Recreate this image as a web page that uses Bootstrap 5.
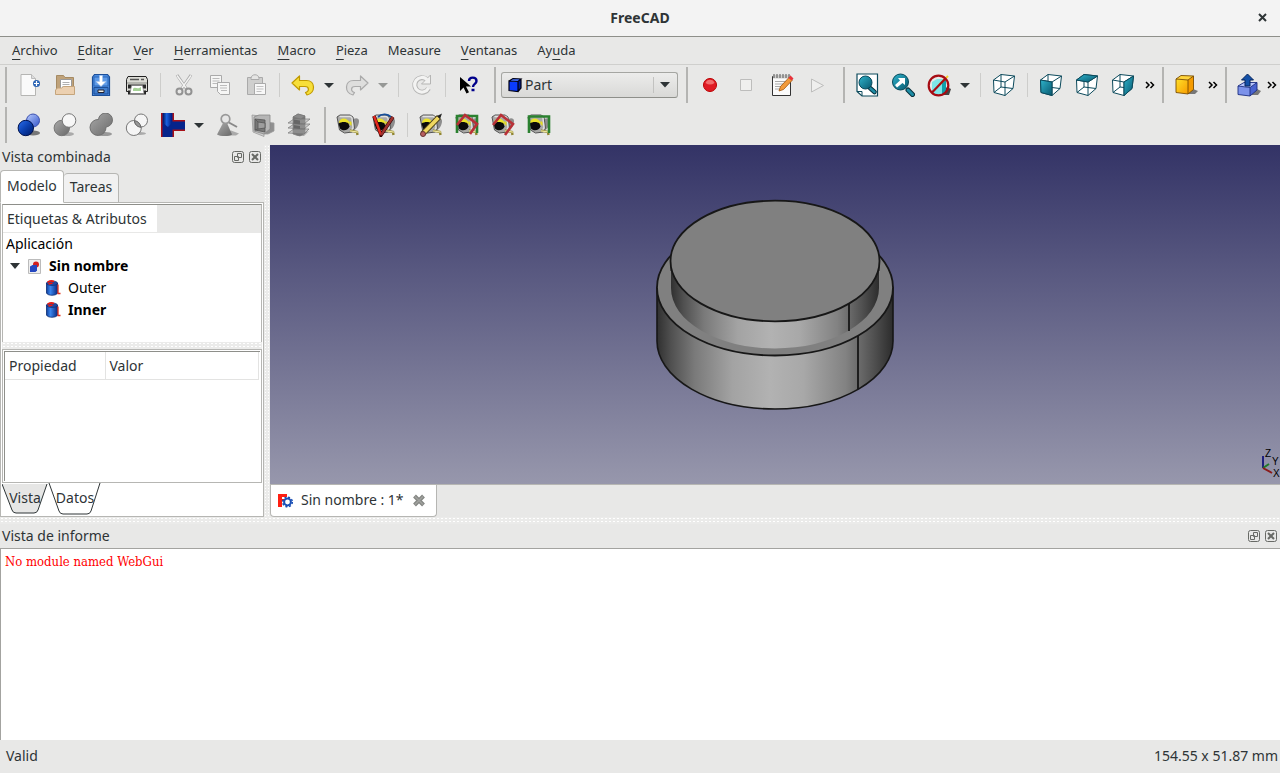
<!DOCTYPE html>
<html lang="es">
<head>
<meta charset="utf-8">
<meta name="viewport" content="width=device-width, initial-scale=1">
<title>FreeCAD</title>
<link rel="stylesheet" href="https://cdn.jsdelivr.net/npm/bootstrap@5.3.0/dist/css/bootstrap.min.css">
<style>
  :root { --chrome:#e8e8e7; --line:#b6b6b3; --dark:#8e8f8a; --ink:#2e3436; }
  body { font-family:"Noto Sans",sans-serif; font-size:14px; line-height:20px; color:var(--ink); background:var(--chrome); }
  button { font:inherit; color:inherit; }
  .titlebar { height:37px; background:#f3f3f3; border-bottom:1px solid var(--dark); padding-bottom:1px; }
  .close-win { right:9px; font-size:16px; line-height:20px; padding:0; width:18px; height:20px; border:0; background:none; }
  .menubar { height:28px; border-bottom:1px solid #cfcfcd; padding:0 0 1px 12px; gap:20px; font-size:13px; }
  .menubar a { color:var(--ink); text-decoration:none; }
  .menubar u { text-underline-offset:4px; }
  .tools { height:40px; padding-left:5px; }
  .tools > * { flex:none; }
  .grip { width:2px; height:36px; background:#b4b4b2; margin:0 4px 0 7px; }
  .grip:first-child { margin-left:0; }
  .rule { width:1px; height:24px; background:#cdcdcb; margin:0 5px; }
  .tool { width:36px; height:36px; padding:0; border:0; background:none; display:flex; align-items:center; justify-content:center; }
  .tool svg { width:24px; height:24px; }
  .drop { width:18px; height:36px; padding:0 2px 0 0; border:0; background:none; display:flex; align-items:center; justify-content:center; }
  .drop::before { content:""; border:5px solid transparent; border-top-color:var(--ink); border-bottom:0; }
  .drop:disabled::before { border-top-color:#969896; }
  .more { width:14px; padding:0; border:0; background:none; display:flex; align-items:center; justify-content:end; }
  .bench { width:177px; height:26px; margin:0 1px; border:1px solid #a5a6a2; border-bottom-color:#8e8f8a; border-radius:3px; background:linear-gradient(#ececeb,#d9d9d7); }
  .bench select { appearance:none; border:0; background:none; font:inherit; color:inherit; width:100%; height:24px; padding:0 23px; }
  .bench .cube { left:5px; top:4px; }
  .bench .tick { right:2px; top:4px; height:16px; width:22px; border-left:1px solid #c2c2c0; pointer-events:none; }
  .work { flex:372 1 0; }
  .report { flex:223 1 0; }
  .side { width:264px; }
  .dock-title { height:24px; padding:0 3px 0 2px; }
  .dock-title button { border:0; padding:0; background:none; display:flex; margin-left:5px; }
  .split-v { width:6px; background-color:#ebebea; background-image:radial-gradient(circle,#fff 1px,transparent 1px); background-size:3px 3px; }
  .split-h { height:7px; flex:none; background-color:#ebebea; background-image:radial-gradient(circle,#fff 1px,transparent 1px); background-size:4px 3px; }
  .dock-tabs { height:34px; }
  .dock-tabs button { border:1px solid var(--line); border-radius:4px 4px 0 0; padding:0 6px 2px; background:#f1f1f1; height:30px; border-left-width:0; }
  .dock-tabs button.active { height:33px; background:#fff; border-left-width:1px; border-bottom-color:#fff; }
  .dock-tabs .fillline { border-bottom:1px solid var(--line); }
  .pane { background:#fff; border:1px solid var(--line); border-top:0; padding:1px; }
  .tree { flex:140 1 0; border:1px solid var(--line); border-top-color:var(--dark); border-bottom:0; }
  .tree-head { height:28px; background:var(--chrome); }
  .tree-head span { background:#fff; height:27px; width:154px; line-height:27px; padding-left:4px; display:block; }
  .tree-body { color:#000; line-height:22px; }
  .tree-body li { padding-left:3px; }
  .tree-body .root { padding-left:7px; gap:8px; }
  .tree-body .leaf { padding-left:42px; gap:7px; }
  .fold { width:10px; height:22px; border:0; padding:0; background:none; display:flex; align-items:center; }
  .fold::before { content:""; border:5px solid transparent; border-top:6px solid var(--ink); border-bottom:0; }
  .props { flex:133 1 0; border:1px solid var(--line); padding:1px; }
  .props-in { border:1px solid var(--dark); border-right:0; border-bottom:0; padding-right:1px; }
  .props th { font-weight:400; height:28px; padding:0 4px; border:solid #e3e3e2; border-width:0 1px 1px 0; }
  .trap { height:32px; border:0; padding:0 0 3px; background:none; }
  .trap svg { left:0; top:0; }
  .trap span { position:relative; }
  .view { background:linear-gradient(#333366,#9797ac); }
  .doc-tabs { height:33px; border-top:1px solid var(--line); }
  .doc-tab { width:167px; background:#fff; border:1px solid var(--line); border-top:0; border-radius:0 0 4px 4px; padding:0 10px 1px 7px; height:32px; }
  .doc-tab button { border:0; background:none; padding:0; }
  .log { background:#fff; border:1px solid #a3a3a0; border-width:1px 0 0 1px; color:#f00; font-family:"DejaVu Serif Condensed","DejaVu Serif",serif; font-size:13px; padding:3px 4px; }
  .status { height:33px; padding:0 2px 1px 6px; }
</style>
</head>
<body>
<svg width="0" height="0" class="position-absolute" aria-hidden="true">
  <defs>
    <linearGradient id="gBlue" x1="0" y1="0" x2="1" y2="1"><stop offset="0" stop-color="#2a6ff0"/><stop offset=".5" stop-color="#0b3fae"/><stop offset="1" stop-color="#001a66"/></linearGradient>
    <linearGradient id="gPale" x1="0" y1="0" x2="1" y2="1"><stop offset="0" stop-color="#b9ccff"/><stop offset="1" stop-color="#3455c8"/></linearGradient>
    <linearGradient id="gGrey" x1="0" y1="0" x2="1" y2="1"><stop offset="0" stop-color="#aaa"/><stop offset="1" stop-color="#686868"/></linearGradient>
    <linearGradient id="gTeal" x1="0" y1="0" x2="1" y2="1"><stop offset="0" stop-color="#2fb3cb"/><stop offset="1" stop-color="#07586f"/></linearGradient>
    <linearGradient id="gGold" x1="0" y1="0" x2="1" y2="1"><stop offset="0" stop-color="#ffe02a"/><stop offset="1" stop-color="#f89c00"/></linearGradient>
    <linearGradient id="gPipe"><stop offset="0" stop-color="#001a66"/><stop offset=".4" stop-color="#1a62e0"/><stop offset="1" stop-color="#001a80"/></linearGradient>
    <linearGradient id="gCyl"><stop offset="0" stop-color="#0f3f9a"/><stop offset=".35" stop-color="#3c86ee"/><stop offset="1" stop-color="#0a2a80"/></linearGradient>
    <symbol id="tape" viewBox="0 0 24 24">
      <path d="M15 8c4-4 8-3 8 0s-2 8-5 9z" fill="#8d8d8d"/>
      <path d="M1 4l3-2h10l3 2 1.500 11-2 4-8 1-5-3z" fill="#a9a9a7" stroke="#555" stroke-width="1"/>
      <path d="M3.500 3.500h11l1.500 1.500 1 10-2 3" fill="none" stroke="#e2e2e2" stroke-width="1.400"/>
      <path d="M3 10C3 4 12 4 13.500 10l-1 2H4z" fill="#ece42a"/>
      <path d="M2.500 10.500c3-2 8-2 10 0l1 3c-1 4-7 5-9.500 2z" fill="#0b0b0b"/><path d="M13.500 8l2 1v4l-2-2z" fill="#e7df20"/>
      <path d="M14 17.500l7 1.500.500 3" fill="none" stroke="#8f8430" stroke-width="2.400"/><path d="M14 17.800l8 1.400" stroke="#eee6a0" stroke-width="1.200"/>
    </symbol>
    <symbol id="wire" viewBox="0 0 24 24"><path d="M1.500 7L13 9v13.500L2 19.500zM1.500 7L9 1.500 22.500 3 13 9M22.500 3L21 15.500l-8 7M9 1.500V14l12 1.500M9 14l-7 5.500" fill="none" stroke="#0c4a5c" stroke-width="1"/></symbol>
    <symbol id="cyl" viewBox="0 0 16 16"><path d="M1.500 3v10c1 3 10 3 11 0V3z" fill="url(#gCyl)" stroke="#0a2a70" stroke-width=".8"/><ellipse cx="7" cy="3.200" rx="5.500" ry="2.300" fill="#24489e" stroke="#0a2a70" stroke-width=".6"/><path d="M2.500 2.500C4 1 7 .800 9 1.500M3.500 4l4-1" fill="none" stroke="#f2190c" stroke-width="1.700"/><path d="M13 4.500V13.500h2.500" fill="none" stroke="#e0301c" stroke-width="1.300"/></symbol>
  </defs>
</svg>
<div class="d-flex flex-column vh-100 overflow-hidden">

  <header class="titlebar position-relative d-flex align-items-center justify-content-center flex-shrink-0">
    <strong>FreeCAD</strong>
    <button class="close-win position-absolute d-flex align-items-center justify-content-center" aria-label="Cerrar"><svg width="9" height="9" viewBox="0 0 9 9"><path d="M1 1l7 7M8 1L1 8" stroke="#2e3436" stroke-width="2"/></svg></button>
  </header>

  <nav class="menubar d-flex align-items-center flex-shrink-0">
    <a href="#"><u>A</u>rchivo</a><a href="#"><u>E</u>ditar</a><a href="#"><u>V</u>er</a><a href="#"><u>H</u>erramientas</a><a href="#"><u>M</u>acro</a><a href="#"><u>P</u>ieza</a><a href="#">Measure</a><a href="#"><u>V</u>entanas</a><a href="#">Ay<u>u</u>da</a>
  </nav>

  <div class="tools d-flex align-items-center flex-shrink-0 overflow-hidden" role="toolbar" aria-label="Archivo y vista">
    <span class="grip"></span>
    <button class="tool" aria-label="Nuevo"><svg viewBox="0 0 24 24"><path d="M4 1.500h10.500l4 4V22.500H4z" fill="#fafafa" stroke="#b5b5b3"/><path d="M14.500 1.500v4h4" fill="#ddd" stroke="#bbb"/><circle cx="19.500" cy="10.500" r="3.500" fill="#2a63b4"/><path d="M19.500 8v5M17 10.500h5" stroke="#fff" stroke-width="1.200"/></svg></button>
    <button class="tool" aria-label="Abrir"><svg viewBox="0 0 24 24"><path d="M3.500 19V2.500h7l1.500 2h8.500V19z" fill="#bfa27a" stroke="#a58a63"/><path d="M7.500 6.500h11v11h-11z" fill="#fff" stroke="#999"/><path d="M9.500 9.500h7M9.500 11.500h7M9.500 13.500h5" stroke="#b0b0b0"/><path d="M2.500 17l2-2h4l2-1.500h11V21.500h-19z" fill="#ecd0b0" stroke="#c5a57c"/></svg></button>
    <button class="tool" aria-label="Guardar"><svg viewBox="0 0 24 24"><path d="M3.500 4l2-2.500h13l2 2.500v18.500h-17z" fill="#4a8be0" stroke="#1c4f99" stroke-width="1.200"/><path d="M5 4h14v9H5z" fill="#5e9be8" stroke="#2b66b8"/><path d="M10.500 2.500h3v6h3.500l-5 5-5-5h3.500z" fill="#fff" stroke="#a9c5ea" stroke-width=".6"/><path d="M5 14.500h14v6.500H5z" fill="#3f7dcd" stroke="#1c4f99"/><path d="M9 17h6v2.500H9z" fill="#f2f2e8" stroke="#223"/></svg></button>
    <button class="tool" aria-label="Imprimir"><svg viewBox="0 0 24 24"><path d="M3 3.500h18l1.500 3v12H1.500v-12z" fill="#dcdcd6" stroke="#222"/><path d="M5 6.500h9M16 6.500h3" stroke="#555" stroke-width="1.600"/><path d="M2 9h20v2H2z" fill="#b4b5af"/><path d="M3 11.500h18v4H3z" fill="#2a2a2a"/><path d="M3 17.500h18v4H3z" fill="#222"/><path d="M6.500 12.500h11l1.500 8H5z" fill="#fff" stroke="#777" stroke-width=".6"/><path d="M8 16c2-3 4 1 8-2v4H8z" fill="#a5d296"/></svg></button>
    <span class="rule"></span>
    <button class="tool" aria-label="Cortar"><svg viewBox="0 0 24 24" fill="none"><path d="M5 2l9.500 14M19 2L9.500 16" stroke="#aaa" stroke-width="3"/><path d="M5 2.500l9 12.500M19 2.500L10 15" stroke="#f3f3f2" stroke-width="1.400"/><circle cx="7.500" cy="18.500" r="3" stroke="#929292" stroke-width="2"/><circle cx="16.500" cy="18.500" r="3" stroke="#929292" stroke-width="2"/></svg></button>
    <button class="tool" aria-label="Copiar"><svg viewBox="0 0 24 24" fill="#f6f6f5" stroke="#aaa"><path d="M2.500 2.500h11v12h-11z"/><path d="M4.500 5.500h7M4.500 8h7M4.500 10.500h5" stroke="#bbb"/><path d="M9.500 9.500h12v12h-9l-3-3z"/><path d="M12 12.500h7M12 15h7M13 17.500h6" stroke="#bbb"/></svg></button>
    <button class="tool" aria-label="Pegar"><svg viewBox="0 0 24 24" stroke="#aaa"><path d="M3.500 4.500h15v17h-15z" fill="#cfcfce"/><path d="M7 5.500c0-5 8-5 8 0v1H7z" fill="#e5e5e4"/><path d="M10.500 10.500h11v11h-11z" fill="#f8f8f8"/><path d="M12.500 13.500h7M12.500 16h7M12.500 18.500h5" stroke="#c2c2c2"/></svg></button>
    <span class="rule"></span>
    <button class="tool" aria-label="Deshacer"><svg viewBox="0 0 24 24"><path d="M1 10l7.500-7v4.500h7c9 0 9.500 12.500.5 14.500l-1.500-2.500c4-1 4-6-.5-6H8.500V17z" fill="#f7df3a" stroke="#c19a00" stroke-width="1.200" stroke-linejoin="round"/></svg></button>
    <button class="drop" aria-label="Lista deshacer"></button>
    <button class="tool" aria-label="Rehacer" disabled><svg viewBox="0 0 24 24"><path d="M23 10l-7.500-7v4.500h-7c-9 0-9.500 12.500-.5 14.500l1.500-2.500c-4-1-4-6 .5-6h5.500V17z" fill="#dededd" stroke="#aaa" stroke-width="1.200" stroke-linejoin="round"/></svg></button>
    <button class="drop" aria-label="Lista rehacer" disabled></button>
    <span class="rule"></span>
    <button class="tool" aria-label="Actualizar" disabled><svg viewBox="0 0 24 24" fill="none"><path d="M17 6.500a7.300 7.300 0 1 0 1.500 9" stroke="#b5b5b4" stroke-width="5"/><path d="M20.500 2v9h-9z" fill="#f1f1f0" stroke="#b5b5b4"/><path d="M17 6.500a7.300 7.300 0 1 0 1.500 8.500" stroke="#f3f3f2" stroke-width="3.200"/></svg></button>
    <span class="rule"></span>
    <button class="tool" aria-label="¿Qué es esto?"><svg viewBox="0 0 24 24"><path d="M3 4v14l3.500-3.500 3 6 2.500-1.200-3-5.800h5z" fill="#000"/><path d="M12 8c0-4.500 7.500-4.500 7.500 0 0 3-3.500 2.800-3.500 6M14.500 17h3" fill="none" stroke="#00008b" stroke-width="2.400"/></svg></button>
    <span class="grip"></span>
    <label class="bench position-relative"><svg class="cube position-absolute" width="16" height="16" viewBox="0 0 16 16"><path d="M2 4l9 .500v10L2 13.500z" fill="#0a3bff"/><path d="M2 4l4-2.500 8 .5-3 2.500z" fill="#4a76ff"/><path d="M14 2v9l-3 3.500v-10z" fill="#001f99"/><path d="M2 4l9 .500v10L2 13.500zM2 4l4-2.500 8 .5-3 2.500M14 2v9l-3 3.500" fill="none" stroke="#001" stroke-width="1.200"/></svg>
      <select aria-label="Banco de trabajo"><option>Part</option></select>
      <span class="tick position-absolute d-flex align-items-center justify-content-center"><svg width="10" height="6" viewBox="0 0 10 6"><path d="M0 0h10L5 5.500z" fill="#2e3436"/></svg></span></label>
    <span class="grip"></span>
    <button class="tool" aria-label="Grabar macro"><svg viewBox="0 0 24 24"><circle cx="12" cy="12" r="6.500" fill="#e01b24" stroke="#b00"/><path d="M7.500 10c1-4.500 8-4.500 9 0-3 2-6 2-9 0" fill="#f26d6d"/></svg></button>
    <button class="tool" aria-label="Detener" disabled><svg viewBox="0 0 24 24"><path d="M6.500 6.500h11v11h-11z" fill="#efefee" stroke="#bdbdbc"/></svg></button>
    <button class="tool" aria-label="Macros"><svg viewBox="0 0 24 24"><path d="M2.500 3.500h18v19h-18z" fill="#fbfbfb" stroke="#333"/><path d="M3 2h18v3.500H3z" fill="#cfcfcd"/><path d="M4 1v4M7 1v4M10 1v4M13 1v4M16 1v4M19 1v4" stroke="#555"/><path d="M5 8.500h13M5 11h10M5 13.500h8M5 16h5" stroke="#aaa"/><path d="M9 18l1.500-4.500 9-9.500 3 3-9 9.500z" fill="#f29b3c" stroke="#a15510" stroke-width=".8"/><path d="M18.500 5l2-2.500 3 3-2 2z" fill="#e8323c"/></svg></button>
    <button class="tool" aria-label="Ejecutar macro" disabled><svg viewBox="0 0 24 24"><path d="M5.500 6v13l12-6.500z" fill="#efefee" stroke="#bdbdbc"/></svg></button>
    <span class="grip"></span>
    <button class="tool" aria-label="Ajustar todo"><svg viewBox="0 0 24 24"><path d="M2 1h20.500v22H7l-5-4.500z" fill="#fff" stroke="#0c4a5c" stroke-width="1.200"/><path d="M2 18.500h5V23" fill="none" stroke="#0c4a5c"/><path d="M15 15l4.500 4" stroke="#062f3b" stroke-width="4.600" stroke-linecap="round"/><path d="M15.500 15.500l4 3.500" stroke="#1d8ca5" stroke-width="2.600" stroke-linecap="round"/><circle cx="10.500" cy="9.500" r="6.500" fill="url(#gTeal)" stroke="#07485a"/></svg></button>
    <button class="tool" aria-label="Ajustar selección"><svg viewBox="0 0 24 24"><path d="M17 17l4.500 4.500" stroke="#062f3b" stroke-width="5" stroke-linecap="round"/><path d="M17 17l4.500 4.500" stroke="#1d8ca5" stroke-width="3" stroke-linecap="round"/><circle cx="9.500" cy="9" r="8" fill="url(#gTeal)" stroke="#07485a"/><path d="M4 12l5-4.500-2-2.500h7v7l-2.500-2L6 14.500z" fill="#fff"/></svg></button>
    <button class="tool" aria-label="Estilo de dibujo"><svg viewBox="0 0 24 24"><path d="M13 22h9l2-6-4-2z" fill="#444"/><path d="M5 9l5-3h9v12l-4 4H7l-2-3z" fill="#7fe6e8"/><path d="M15 10l4-4v12l-4 4z" fill="#12a0ac"/><path d="M12 12l9-9" stroke="#f7d028" stroke-width="2"/><circle cx="11.500" cy="12.500" r="9.800" fill="none" stroke="#a60c14" stroke-width="2.200"/><path d="M5 19.500L18.500 5.500" stroke="#a60c14" stroke-width="2.200"/></svg></button>
    <button class="drop" aria-label="Más estilos"></button>
    <span class="rule"></span>
    <button class="tool" aria-label="Axonométrica"><svg viewBox="0 0 24 24"><path d="M1.500 7L9 1.500 22.500 3 21 15.500l-8 7-11-3z" fill="#fff"/><use href="#wire"/></svg></button>
    <span class="rule"></span>
    <button class="tool" aria-label="Frontal"><svg viewBox="0 0 24 24"><path d="M1.500 7L9 1.500 22.500 3 21 15.500l-8 7-11-3z" fill="#fff"/><use href="#wire"/><path d="M1.500 7L13 9v13.500L2 19.500z" fill="url(#gTeal)" stroke="#0c4a5c"/></svg></button>
    <button class="tool" aria-label="Superior"><svg viewBox="0 0 24 24"><path d="M1.500 7L9 1.500 22.500 3 21 15.500l-8 7-11-3z" fill="#fff"/><use href="#wire"/><path d="M1.500 7L9 1.500 22.500 3 13 9z" fill="url(#gTeal)" stroke="#0c4a5c"/></svg></button>
    <button class="tool" aria-label="Derecha"><svg viewBox="0 0 24 24"><path d="M1.500 7L9 1.500 22.500 3 21 15.500l-8 7-11-3z" fill="#fff"/><use href="#wire"/><path d="M22.500 3L21 15.500l-8 7V9z" fill="url(#gTeal)" stroke="#0c4a5c"/></svg></button>
    <button class="more" aria-label="Más vistas"><svg width="10" height="8" viewBox="0 0 10 8"><path d="M1 1l3 3-3 3M5.500 1l3 3-3 3" fill="none" stroke="#000" stroke-width="1.500"/></svg></button>
    <span class="grip"></span>
    <button class="tool" aria-label="Cubo"><svg viewBox="0 0 24 24"><path d="M14 21h7l3-3-5-2z" fill="#777"/><path d="M2 6l12 1v14L2 19.500z" fill="url(#gGold)"/><path d="M2 6l5-3.500 12.500.5L14 7z" fill="#ffd43a"/><path d="M19.500 3v13.500L14 21V7z" fill="#f59b00"/><path d="M2 6l12 1v14L2 19.500zM2 6l5-3.500 12.500.5L14 7M19.500 3v13.500L14 21" fill="none" stroke="#7a4d00" stroke-width=".9"/></svg></button>
    <button class="more" aria-label="Más sólidos"><svg width="10" height="8" viewBox="0 0 10 8"><path d="M1 1l3 3-3 3M5.500 1l3 3-3 3" fill="none" stroke="#000" stroke-width="1.500"/></svg></button>
    <span class="grip"></span>
    <button class="tool" aria-label="Extruir"><svg viewBox="0 0 24 24"><path d="M14 22h7l3-4-4-2z" fill="#777"/><path d="M1 13l12 1.500V23L1 21.500z" fill="#7c92ea"/><path d="M1 13l6-3.500h13l-7 5z" fill="#b6c4fb"/><path d="M20 9.500V17l-7 6v-8.500z" fill="#4963cf"/><path d="M1 13l12 1.500V23L1 21.500zM1 13l6-3.500h13l-7 5M20 9.500V17l-7 6" fill="none" stroke="#1b2c80" stroke-width=".9"/><path d="M10.500 1l6 6H13v6H8V7H4.500z" fill="#1451a8" stroke="#06245c"/></svg></button>
    <button class="more justify-content-start" aria-label="Más operaciones"><svg width="10" height="8" viewBox="0 0 10 8"><path d="M1 1l3 3-3 3M5.500 1l3 3-3 3" fill="none" stroke="#000" stroke-width="1.500"/></svg></button>
  </div>

  <div class="tools d-flex align-items-center flex-shrink-0 overflow-hidden" role="toolbar" aria-label="Operaciones booleanas y medidas">
    <span class="grip"></span>
    <button class="tool" aria-label="Booleana"><svg viewBox="0 0 24 24"><ellipse cx="16" cy="20" rx="7" ry="2.500" fill="#777"/><circle cx="16" cy="7.500" r="6.500" fill="url(#gPale)" stroke="#3b50b0"/><circle cx="8.800" cy="15" r="7.700" fill="url(#gBlue)" stroke="#00124d"/></svg></button>
    <button class="tool" aria-label="Corte"><svg viewBox="0 0 24 24"><ellipse cx="14" cy="21" rx="7" ry="2" fill="#aaa"/><circle cx="8.800" cy="15" r="7.700" fill="url(#gGrey)" stroke="#777"/><circle cx="16" cy="7.500" r="6.800" fill="#f7f7f7" stroke="#777"/></svg></button>
    <button class="tool" aria-label="Unión"><svg viewBox="0 0 24 24"><ellipse cx="16" cy="21" rx="7" ry="2" fill="#999"/><path d="M9.500 6.500A7 7 0 1 1 17 14 8 8 0 1 1 9.500 6.500z" fill="url(#gGrey)" stroke="#707070"/></svg></button>
    <button class="tool" aria-label="Intersección"><svg viewBox="0 0 24 24"><ellipse cx="15" cy="20.500" rx="6" ry="1.500" fill="#aaa"/><circle cx="8.800" cy="15" r="7.500" fill="#f5f5f5" stroke="#777"/><circle cx="16" cy="7.500" r="6.500" fill="#f5f5f5" stroke="#777"/><path d="M9.500 7.600C9.500 11 12 14 16 14.200 15.500 11 13 8 9.500 7.600z" fill="#999" stroke="#666"/></svg></button>
    <button class="tool" aria-label="Unir"><svg viewBox="0 0 24 24"><path d="M0 0h13v24H0z" fill="#a81018"/><path d="M12 7h12v11H12z" fill="#a81018"/><path d="M1.500 0h10v24h-10z" fill="#06248c"/><path d="M2 0h9v10l-4 4-5-4z" fill="url(#gPipe)"/><path d="M10 8.500h14v8H10z" fill="#06248c"/></svg></button>
    <button class="drop" aria-label="Más uniones"></button>
    <button class="tool" aria-label="Comprobar geometría"><svg viewBox="0 0 24 24"><path d="M4 22.500h17l3-2-8-3z" fill="#aaa"/><path d="M8 10L2 21.500c4 2 12 2 15 0L12 10z" fill="url(#gGrey)"/><path d="M13 9l9 5" stroke="#888" stroke-width="2"/><circle cx="10.500" cy="6" r="4.300" fill="#e6e6e6" stroke="#999" stroke-width="1.700"/></svg></button>
    <button class="tool" aria-label="Eliminar características"><svg viewBox="0 0 24 24" stroke="#999" stroke-width=".8"><path d="M1 2l12 1.500v20L2 19z" fill="#cfcfcf"/><path d="M13 9l10 1v8l-6 3h-4z" fill="#909090"/><path d="M3 4l5-2h11v14l-6 5-10-3z" fill="#b5b5b5" stroke="#888"/><path d="M4 6l10 1v12L4 17z" fill="#777" stroke="#555"/><path d="M7 9l7 1v5l-7 1z" fill="#9d9d9d" stroke="#555"/><path d="M4 6l3 3M4 17l3-1" stroke="#555"/></svg></button>
    <button class="tool" aria-label="Secciones"><svg viewBox="0 0 24 24" stroke="#777" stroke-width=".7"><path d="M8 23h9l5-5z" fill="#aaa" stroke="none"/><path d="M6 4v17l7 2 5-3V3l-7-2z" fill="#777"/><path d="M1 10l6-4h16l-6 5zM1 15l6-4h16l-6 5zM1 20l6-4h15l-5 5z" fill="#aaa" fill-opacity=".45"/><path d="M6 4l5-3 7 2-4 3z" fill="#8a8a8a"/><path d="M6.500 6.500l6.500 1v4l-6.500-1zM6.500 12l6.500 1v3l-6.500-1z" fill="#666" stroke="none"/></svg></button>
    <span class="grip"></span>
    <button class="tool" aria-label="Medir lineal"><svg viewBox="0 0 24 24"><use href="#tape"/></svg></button>
    <button class="tool" aria-label="Medir angular"><svg viewBox="0 0 24 24"><use href="#tape"/><path d="M6 4c4-4 10-3 13 0" fill="none" stroke="#174f9a" stroke-width="1.800"/><path d="M2 3l7 19L21 4" fill="none" stroke="#300" stroke-width="3.600"/><path d="M2 3l7 19" stroke="#e32a20" stroke-width="2.400"/><path d="M9 22L21 4" stroke="#a03430" stroke-width="2.400"/></svg></button>
    <span class="rule"></span>
    <button class="tool" aria-label="Borrar medidas"><svg viewBox="0 0 24 24"><use href="#tape"/><path d="M3.500 21L20 4" stroke="#4f4418" stroke-width="5.500"/><path d="M4 20.500L19.500 4.500" stroke="#f0d860" stroke-width="3.800"/><path d="M18 3l5-2.500L21 6z" fill="#222"/><circle cx="4" cy="21" r="2.500" fill="#b86060" stroke="#633"/></svg></button>
    <button class="tool" aria-label="Alternar todo"><svg viewBox="0 0 24 24"><use href="#tape"/><path d="M2 20V3h20v17" fill="none" stroke="#2b8130" stroke-width="2.600"/><path d="M2 12l8-10 12 9-7 10" fill="none" stroke="#b83138" stroke-width="2.600"/></svg></button>
    <button class="tool" aria-label="Alternar 3D"><svg viewBox="0 0 24 24"><use href="#tape"/><path d="M2 12l8-10 12 9-8 11" fill="none" stroke="#b83138" stroke-width="2.600"/></svg></button>
    <button class="tool" aria-label="Alternar delta"><svg viewBox="0 0 24 24"><use href="#tape"/><path d="M2 20V3.500h20V20" fill="none" stroke="#2b8130" stroke-width="2.600"/></svg></button>
  </div>

  <main class="work d-flex">
    <aside class="side d-flex flex-column flex-shrink-0">
      <div class="dock-title d-flex align-items-center"><span class="me-auto">Vista combinada</span>
        <button aria-label="Desacoplar"><svg width="12" height="12" viewBox="0 0 12 12" fill="none" stroke="#686a66"><rect x=".5" y=".5" width="11" height="11" rx="2"/><path d="M5.500 2.500h4v4h-4zM2.500 5.500h4v4h-4z"/></svg></button>
        <button aria-label="Cerrar panel"><svg width="12" height="12" viewBox="0 0 12 12" fill="none" stroke="#686a66"><rect x=".5" y=".5" width="11" height="11" rx="2"/><path d="M3 3l6 6M9 3L3 9" stroke-width="2"/></svg></button>
      </div>
      <div class="dock-tabs d-flex align-items-end" role="tablist">
        <button class="active" role="tab">Modelo</button><button role="tab">Tareas</button><span class="fillline flex-grow-1"></span>
      </div>
      <div class="pane flex-grow-1 d-flex flex-column">
        <div class="tree">
          <div class="tree-head"><span>Etiquetas &amp; Atributos</span></div>
          <ul class="tree-body list-unstyled mb-0">
            <li>Aplicación</li>
            <li class="root d-flex align-items-center fw-bold"><button class="fold" aria-label="Contraer"></button><svg width="13" height="15" viewBox="0 0 13 15"><path d="M.5.5h12v14H.5z" fill="#eee" stroke="#bbb"/><circle cx="8" cy="5.500" r="3" fill="#d3201f"/><path d="M2 7.500L4.500 6H9v5.500L7.500 13H2z" fill="#2447c0"/></svg><span>Sin nombre</span></li>
            <li class="leaf d-flex align-items-center"><svg width="16" height="16"><use href="#cyl"/></svg><span>Outer</span></li>
            <li class="leaf d-flex align-items-center fw-bold"><svg width="16" height="16"><use href="#cyl"/></svg><span>Inner</span></li>
          </ul>
        </div>
        <div class="split-h"></div>
        <div class="props d-flex">
          <div class="props-in flex-grow-1">
            <table class="w-100"><colgroup><col width="100"><col></colgroup><thead><tr><th scope="col">Propiedad</th><th scope="col">Valor</th></tr></thead><tbody></tbody></table>
          </div>
        </div>
        <div class="d-flex" role="tablist">
          <button class="trap position-relative" role="tab" style="width:46px"><svg class="position-absolute" width="46" height="32"><path d="M0 1l10 26q1 3 4 3h18q3 0 4-3L45 1z" fill="#e6e6e5"/><path d="M0 1l10 26q1 3 4 3h18q3 0 4-3L45 1" fill="none" stroke="#2e3436"/></svg><span>Vista</span></button>
          <button class="trap position-relative" role="tab" style="width:54px"><svg class="position-absolute" width="54" height="32"><path d="M1 0l10 28q1 3 4 3h24q3 0 4-3L52 0" fill="#fff" stroke="#2e3436"/></svg><span>Datos</span></button>
        </div>
      </div>
    </aside>
    <div class="split-v flex-shrink-0"></div>
    <section class="flex-grow-1 d-flex flex-column overflow-hidden">
      <div class="view flex-grow-1 position-relative overflow-hidden">
        <svg class="position-absolute w-100 h-100 top-0 start-0" viewBox="0 0 1010 339" role="img" aria-label="Pieza 3D">
          <defs><linearGradient id="wall"><stop offset="0" stop-color="#303030"/><stop offset=".06" stop-color="#505050"/><stop offset=".16" stop-color="#7a7a7a"/><stop offset=".32" stop-color="#a3a3a3"/><stop offset=".48" stop-color="#b2b2b2"/><stop offset=".62" stop-color="#a8a8a8"/><stop offset=".8" stop-color="#828282"/><stop offset=".92" stop-color="#505050"/><stop offset="1" stop-color="#2c2c2c"/></linearGradient></defs>
          <path d="M387 142.500v53.500a118 68 0 0 0 236 0v-53.500z" fill="url(#wall)" stroke="#171717" stroke-width="1.600"/>
          <ellipse cx="505" cy="142.500" rx="118" ry="68" fill="#808080" stroke="#171717" stroke-width="1.800"/>
          <path d="M401 116v27a104 60.500 0 0 0 208 0v-27z" fill="url(#wall)"/>
          <path d="M401 116v10M609 116v10" stroke="#171717"/>
          <ellipse cx="505" cy="116" rx="104.500" ry="60.300" fill="#808080" stroke="#171717" stroke-width="1.800"/>
          <path d="M579 158v28M588 191v53" stroke="#171717" stroke-width="1.800"/>
          <g fill="none" stroke-width="2"><path d="M993 323V311" stroke="#202080"/><path d="M993 323l6-4" stroke="#1f7a28"/><path d="M993 323l9 5" stroke="#8b1a1a"/></g>
          <g font-size="10" fill="#000" font-family="Liberation Sans, sans-serif"><text x="995" y="312">Z</text><text x="1002" y="320">Y</text><text x="1003" y="332">X</text></g>
        </svg>
      </div>
      <div class="doc-tabs">
        <div class="doc-tab d-flex align-items-center">
          <svg width="15" height="15" viewBox="0 0 15 15" class="me-2"><path d="M0 1h9v3H4v2h3v2H4v6H0z" fill="#ff1f12"/><circle cx="9.500" cy="9" r="3.400" fill="#fff" stroke="#1a4fb5" stroke-width="2"/><circle cx="9.500" cy="9" r="4.800" fill="none" stroke="#1a4fb5" stroke-width="1.500" stroke-dasharray="2 1.770"/></svg>
          <span class="me-auto">Sin nombre : 1*</span>
          <button class="d-flex" aria-label="Cerrar documento"><svg width="14" height="14" viewBox="0 0 14 14"><path d="M2.500 3l9 9M11.500 3l-9 9" stroke="#858784" stroke-width="4"/><path d="M3 3.500l8 8M11 3.500l-8 8" stroke="#a0a19e" stroke-width="1.500"/></svg></button>
        </div>
      </div>
    </section>
  </main>

  <section class="report d-flex flex-column">
    <div class="split-h"></div>
    <div class="dock-title d-flex align-items-center flex-shrink-0"><span class="me-auto">Vista de informe</span>
      <button aria-label="Desacoplar informe"><svg width="12" height="12" viewBox="0 0 12 12" fill="none" stroke="#686a66"><rect x=".5" y=".5" width="11" height="11" rx="2"/><path d="M5.500 2.500h4v4h-4zM2.500 5.500h4v4h-4z"/></svg></button>
      <button aria-label="Cerrar informe"><svg width="12" height="12" viewBox="0 0 12 12" fill="none" stroke="#686a66"><rect x=".5" y=".5" width="11" height="11" rx="2"/><path d="M3 3l6 6M9 3L3 9" stroke-width="2"/></svg></button>
    </div>
    <div class="log flex-grow-1">No module named WebGui</div>
  </section>

  <footer class="status d-flex align-items-center justify-content-between flex-shrink-0"><span>Valid</span><span>154.55 x 51.87 mm</span></footer>
</div>
<script src="https://cdn.jsdelivr.net/npm/bootstrap@5.3.0/dist/js/bootstrap.bundle.min.js"></script>
</body>
</html>
